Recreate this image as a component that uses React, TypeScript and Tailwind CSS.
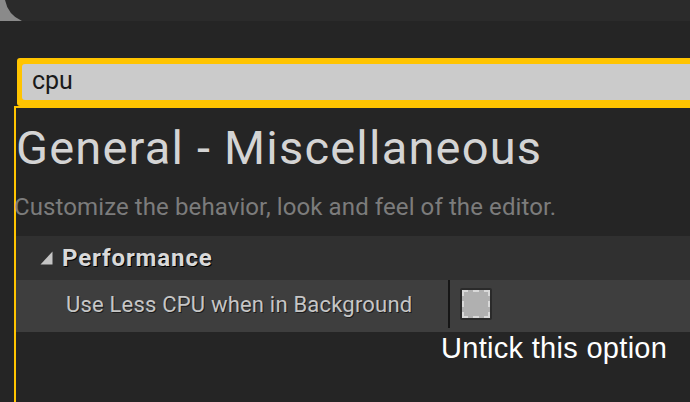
import React from 'react';

/* Search box with focus ring */
function SearchBox() {
    return (
        <div className="ml-[17px] mt-[37px] w-[700px] rounded-[3px] bg-[#ffc400] p-[5px] pb-[6px] pt-[6px]">
            <div className="flex h-[36px] items-center rounded-[3px] bg-[#cbcbcb] px-[10px] pb-[2px] text-[25px] text-[#1a1a1a]">
                cpu
            </div>
        </div>
    );
}

function Checkbox() {
    return (
        <div className="flex h-[32px] w-[32px] items-center justify-center rounded-[2px] bg-[#2a2a2a]">
            <div className="h-[28px] w-[28px] border-2 border-dashed border-[#d8d8d8] bg-[#b0b0b0]" />
        </div>
    );
}

export default function App() {
    return (
        <div
            className="relative h-[402px] w-[690px] overflow-hidden bg-[#252525]"
            style={{ fontFamily: 'Roboto, "Noto Sans", sans-serif' }}
        >
            {/* ── Top bar ── */}
            <div className="relative h-[21px] bg-[#2b2b2b]">
                <svg className="absolute left-0 top-0" width="24" height="21" viewBox="0 0 24 21">
                    <path d="M0 0 H5 Q8 15 22 21 H0 Z" fill="#8a8a8a" />
                </svg>
            </div>

            <SearchBox />

            {/* ── Settings panel ── */}
            <div className="ml-[14px] h-[400px] border-l-2 border-t-2 border-[#ffc400]">
                <h1 className="pt-[13px] text-[47px] leading-[54px] tracking-[1.2px] text-[#d4d4d4]">
                    General - Miscellaneous
                </h1>
                <p className="-ml-[2px] mt-[17px] text-[24px] leading-[30px] tracking-[0.1px] text-[#7c7c7c]">
                    Customize the behavior, look and feel of the editor.
                </p>

                <div className="mt-[14px]">
                    {/* Category header */}
                    <div className="flex h-[44px] items-center gap-[9px] bg-[#303030] pl-[24px]">
                        <svg width="13" height="14" viewBox="0 0 13 14">
                            <path d="M12.5 0.5 V13.5 H0.5 Z" fill="#c4c4c4" />
                        </svg>
                        <span
                            className="text-[24px] font-bold tracking-[0.9px] text-[#d9d9d9]"
                            style={{ textShadow: '1px 1px 0 #000' }}
                        >
                            Performance
                        </span>
                    </div>

                    {/* Property row */}
                    <div className="flex h-[52px] items-start bg-[#3e3e3e]">
                        <div
                            className="flex h-[48px] w-[432px] items-center pl-[50px] text-[22px] tracking-[0.2px] text-[#c6c6c6]"
                            style={{ textShadow: '1px 1px 0 #1c1c1c' }}
                        >
                            Use Less CPU when in Background
                        </div>
                        <div className="h-[48px] w-[2px] bg-[#161616]" />
                        <div className="ml-[10px] mt-[8px]">
                            <Checkbox />
                        </div>
                    </div>

                    <p
                        className="-mt-[1px] ml-[425px] text-[29px] leading-[34px] tracking-[0.3px] text-white"
                        style={{ fontFamily: '"Liberation Sans", Arial, sans-serif' }}
                    >
                        Untick this option
                    </p>
                </div>
            </div>
        </div>
    );
}
